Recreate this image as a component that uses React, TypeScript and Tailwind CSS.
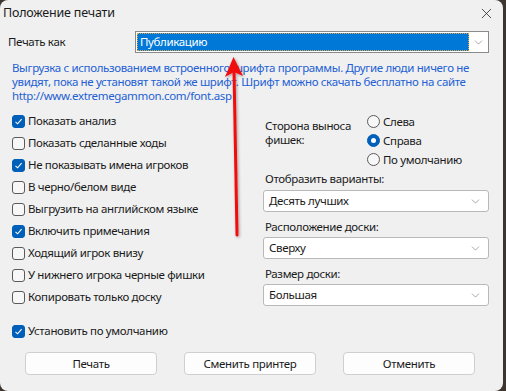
import { ChevronDown, X } from "lucide-react";

const FONT = { fontFamily: '"Noto Sans", "Open Sans", sans-serif' };

const CHECKS: { label: string; checked: boolean }[] = [
  { label: "Показать анализ", checked: true },
  { label: "Показать сделанные ходы", checked: false },
  { label: "Не показывать имена игроков", checked: true },
  { label: "В черно/белом виде", checked: false },
  { label: "Выгрузить на английском языке", checked: false },
  { label: "Включить примечания", checked: true },
  { label: "Ходящий игрок внизу", checked: false },
  { label: "У нижнего игрока черные фишки", checked: false },
  { label: "Копировать только доску", checked: false },
];

function Check({ label, checked }: { label: string; checked: boolean }) {
  return (
    <label className="flex h-[22px] items-center gap-[3px]">
      <span
        className={`flex h-[13px] w-[13px] items-center justify-center rounded-[3px] border ${
          checked ? "border-[#005fb8] bg-[#005fb8]" : "border-[#5a5a5a] bg-[#f7f7f7]"
        }`}
      >
        {checked && (
          <svg width="9" height="9" viewBox="0 0 9 9">
            <path d="M1.5 4.8 L3.6 6.8 L7.6 2.2" fill="none" stroke="white" strokeWidth="1.1" />
          </svg>
        )}
      </span>
      <span>{label}</span>
    </label>
  );
}

function Radio({ label, checked }: { label: string; checked: boolean }) {
  return (
    <div className="flex h-[19px] items-center gap-[3px]">
      <span
        className={`flex h-[13px] w-[13px] items-center justify-center rounded-full border ${
          checked ? "border-[#005fb8] bg-[#005fb8]" : "border-[#5a5a5a] bg-[#f7f7f7]"
        }`}
      >
        {checked && <span className="h-[5px] w-[5px] rounded-full bg-white" />}
      </span>
      <span>{label}</span>
    </div>
  );
}

function Select({ value }: { value: string }) {
  return (
    <div className="flex h-[22px] items-center justify-between rounded-[3px] border border-[#b9b9b9] bg-white pl-[5px] pr-[6px]">
      <span>{value}</span>
      <ChevronDown size={13} strokeWidth={1} className="text-[#606060]" />
    </div>
  );
}

export default function App() {
  return (
    <div
      className="relative h-[391px] w-[506px] overflow-hidden bg-[#3d3630] text-[11.5px] tracking-[-0.35px] text-[#1a1a1a]"
      style={FONT}
    >
      <div className="flex h-[391px] w-[503px] flex-col rounded-[8px] bg-[#f0f0f0]">
        <div className="flex h-[27px] items-center justify-between pl-[3px] pr-[8px] text-[12.5px] tracking-[-0.2px]">
          <span>Положение печати</span>
          <X size={17} strokeWidth={1.1} className="text-[#222]" />
        </div>

        <div className="flex items-center pl-[8px] pr-[14px] pt-[4px]">
          <span className="w-[127px]">Печать как</span>
          <div className="flex h-[22px] flex-1 items-center justify-between border border-[#8a8a8a] bg-white p-[1px]">
            <div className="flex h-full flex-1 items-center border border-dotted border-[#e8a040] bg-[#0078d7] pl-[2px] text-white">
              Публикацию
            </div>
            <div className="flex w-[18px] justify-center">
              <ChevronDown size={13} strokeWidth={1} className="text-[#606060]" />
            </div>
          </div>
        </div>

        <p className="mt-[8px] whitespace-nowrap pl-[12px] leading-[14px] text-[#2360d4]">
          Выгрузка с использованием встроенного шрифта программы. Другие люди ничего не
          <br />
          увидят, пока не установят такой же шрифт. Шрифт можно скачать бесплатно на сайте
          <br />
          http://www.extremegammon.com/font.asp
        </p>

        <div className="mt-[7px] flex">
          <div className="w-[263px] pl-[12px]">
            {CHECKS.map((c) => (
              <Check key={c.label} label={c.label} checked={c.checked} />
            ))}
            <div className="mt-[12px]">
              <Check label="Установить по умолчанию" checked />
            </div>
          </div>

          <div className="w-[226px] pt-[2px]">
            <div className="flex">
              <div className="w-[104px] pl-[2px] pt-[7px] leading-[14px]">
                Сторона выноса
                <br />
                фишек:
              </div>
              <div>
                <Radio label="Слева" checked={false} />
                <Radio label="Справа" checked />
                <Radio label="По умолчанию" checked={false} />
              </div>
            </div>
            <div className="mt-[1px] pl-[2px] leading-[18px]">Отобразить варианты:</div>
            <div className="mt-[2px]">
              <Select value="Десять лучших" />
            </div>
            <div className="mt-[6px] pl-[2px] leading-[18px]">Расположение доски:</div>
            <div className="mt-[1px]">
              <Select value="Сверху" />
            </div>
            <div className="mt-[6px] pl-[2px] leading-[18px]">Размер доски:</div>
            <div className="mt-[1px]">
              <Select value="Большая" />
            </div>
          </div>
        </div>

        <div className="mt-[10px] flex gap-[27px] pl-[25px]">
          {["Печать", "Сменить принтер", "Отменить"].map((b) => (
            <button
              key={b}
              type="button"
              className="flex h-[23px] w-[132px] items-center justify-center rounded-[4px] border border-[#cfcfcf] bg-[#fdfdfd]"
            >
              {b}
            </button>
          ))}
        </div>
      </div>

      <svg className="pointer-events-none absolute left-0 top-0" width="506" height="391">
        <defs>
          <filter id="sh" x="-50%" y="-50%" width="200%" height="200%">
            <feDropShadow dx="1" dy="1" stdDeviation="1.5" floodColor="#000" floodOpacity="0.35" />
          </filter>
        </defs>
        <g filter="url(#sh)">
          <line x1="237" y1="235" x2="234" y2="70" stroke="#f01010" strokeWidth="3" strokeLinecap="round" />
          <path d="M233.5 57 L225 77 L234 72 L243 76 Z" fill="#f01010" />
        </g>
      </svg>
    </div>
  );
}
